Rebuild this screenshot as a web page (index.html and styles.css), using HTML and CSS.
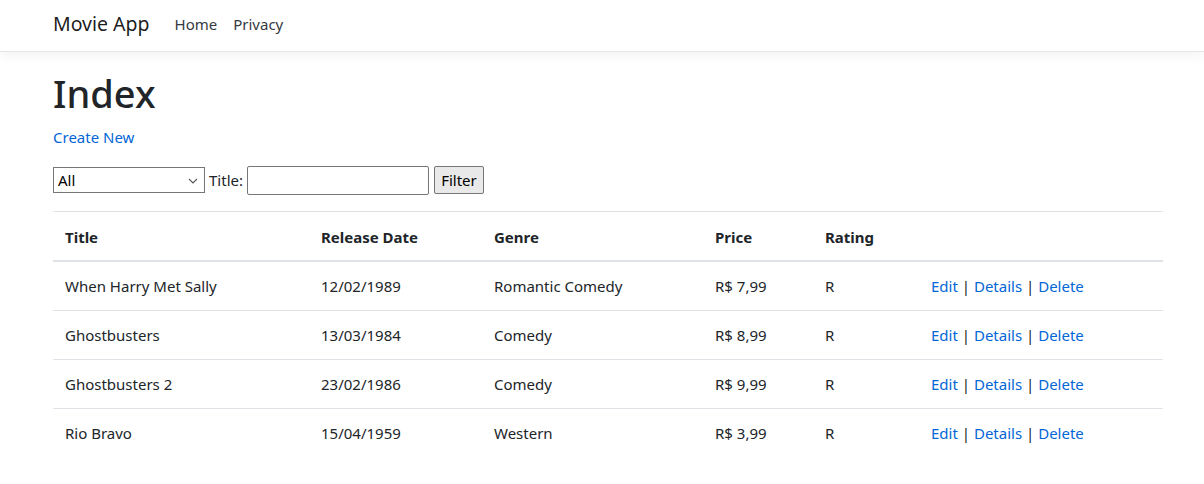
FILE: index.html
```html
<!DOCTYPE html>
<html lang="en">
<head>
<meta charset="utf-8">
<title>Index - Movie App</title>
<link rel="stylesheet" href="styles.css">
</head>
<body>
<header class="site-header">
  <nav class="navbar">
    <div class="container nav-inner">
      <a class="brand" href="#">Movie App</a>
      <ul class="nav-links">
        <li><a class="nav-link" href="#">Home</a></li>
        <li><a class="nav-link" href="#">Privacy</a></li>
      </ul>
    </div>
  </nav>
</header>
<div class="page">
  <main class="container">
    <h1 class="title">Index</h1>
    <p class="create"><a href="#">Create New</a></p>
    <form class="filter">
      <p class="filter-row">
        <span class="select-wrap">
          <select class="genre-select">
            <option>All</option>
            <option>Comedy</option>
            <option>Romantic Comedy</option>
            <option>Western</option>
          </select>
          <svg class="select-arrow" width="10" height="6" viewBox="0 0 10 6" aria-hidden="true"><path d="M1 1 L5 5 L9 1" fill="none" stroke="#555" stroke-width="1.1"/></svg>
        </span>
        <label class="title-label">Title:</label>
        <input class="title-input" type="text">
        <input class="filter-btn" type="submit" value="Filter">
      </p>
    </form>
    <table class="table">
      <thead>
        <tr>
          <th class="c-title">Title</th>
          <th class="c-date">Release Date</th>
          <th class="c-genre">Genre</th>
          <th class="c-price">Price</th>
          <th class="c-rating">Rating</th>
          <th class="c-actions"></th>
        </tr>
      </thead>
      <tbody>
        <tr>
          <td>When Harry Met Sally</td>
          <td>12/02/1989</td>
          <td>Romantic Comedy</td>
          <td>R$ 7,99</td>
          <td>R</td>
          <td><a href="#">Edit</a> | <a href="#">Details</a> | <a href="#">Delete</a></td>
        </tr>
        <tr>
          <td>Ghostbusters</td>
          <td>13/03/1984</td>
          <td>Comedy</td>
          <td>R$ 8,99</td>
          <td>R</td>
          <td><a href="#">Edit</a> | <a href="#">Details</a> | <a href="#">Delete</a></td>
        </tr>
        <tr>
          <td>Ghostbusters 2</td>
          <td>23/02/1986</td>
          <td>Comedy</td>
          <td>R$ 9,99</td>
          <td>R</td>
          <td><a href="#">Edit</a> | <a href="#">Details</a> | <a href="#">Delete</a></td>
        </tr>
        <tr>
          <td>Rio Bravo</td>
          <td>15/04/1959</td>
          <td>Western</td>
          <td>R$ 3,99</td>
          <td>R</td>
          <td><a href="#">Edit</a> | <a href="#">Details</a> | <a href="#">Delete</a></td>
        </tr>
      </tbody>
    </table>
  </main>
</div>
</body>
</html>
```

FILE: styles.css
```css
* { box-sizing: border-box; }

html, body {
  margin: 0;
  padding: 0;
  background: #fff;
}

body {
  font-family: "Noto Sans", "Open Sans", "DejaVu Sans", sans-serif;
  font-size: 15px;
  line-height: 24px;
  color: #212529;
}

a {
  color: #0366d6;
  text-decoration: none;
}

.container {
  max-width: 1140px;
  margin-left: auto;
  margin-right: auto;
  padding-left: 15px;
  padding-right: 15px;
}

.site-header {
  margin-bottom: 16px;
}

.navbar {
  height: 52px;
  padding-left: 12px;
  background: #fff;
  border-bottom: 1px solid #e5e5e5;
  box-shadow: 0 4px 12px rgba(0, 0, 0, 0.05);
}

.nav-inner {
  display: flex;
  align-items: center;
  height: 51px;
  padding-bottom: 3px;
}

.brand {
  font-size: 19.5px;
  line-height: 30px;
  color: rgba(0, 0, 0, 0.9);
  margin-right: 17px;
  white-space: nowrap;
}

.nav-links {
  display: flex;
  list-style: none;
  margin: 0;
  padding: 0;
}

.nav-link {
  display: block;
  padding: 8px;
  color: #343a40;
}

.page {
  padding-left: 12px;
}

.title {
  margin: 0 0 8px;
  padding-top: 1px;
  font-size: 38px;
  font-weight: 500;
  line-height: 48px;
}

.create {
  margin: 0 0 16px;
}

.filter {
  margin: 0;
}

.filter-row {
  margin: 0 0 16px;
  display: flex;
  align-items: center;
  gap: 4px;
  height: 30px;
}

.select-wrap {
  position: relative;
  display: block;
  height: 26px;
}

.genre-select {
  appearance: none;
  -webkit-appearance: none;
  display: block;
  width: 152px;
  height: 26px;
  font-family: inherit;
  font-size: 15px;
  line-height: 24px;
  border: 1px solid #767676;
  border-radius: 0;
  background: #fff;
  color: #000;
  padding: 0 0 0 4px;
  margin: 0;
}

.select-arrow {
  position: absolute;
  right: 7px;
  top: 11px;
  pointer-events: none;
}

.title-label {
  font-size: 15px;
  color: #212529;
}

.title-input {
  width: 182px;
  height: 29px;
  font-family: inherit;
  font-size: 15px;
  border: 1px solid #767676;
  border-radius: 2px;
  padding: 1px 2px;
  margin: 0;
}

.filter-btn {
  height: 28px;
  width: 50px;
  font-family: inherit;
  font-size: 15px;
  color: #000;
  background: #e9e9e9;
  border: 1px solid #767676;
  border-radius: 2px;
  padding: 0 6px;
  margin-left: 1px;
}

.table {
  width: 100%;
  border-collapse: collapse;
  margin-bottom: 16px;
}

.table th,
.table td {
  padding: 12px;
  border-top: 1px solid #dee2e6;
  text-align: left;
  vertical-align: top;
}

.table thead th {
  padding: 13px 12px 11px;
  border-bottom: 2px solid #dee2e6;
  vertical-align: bottom;
  font-weight: 700;
}

.c-title { width: 256px; }
.c-date { width: 173px; }
.c-genre { width: 221px; }
.c-price { width: 110px; }
.c-rating { width: 106px; }
.c-actions { width: 244px; }
```
